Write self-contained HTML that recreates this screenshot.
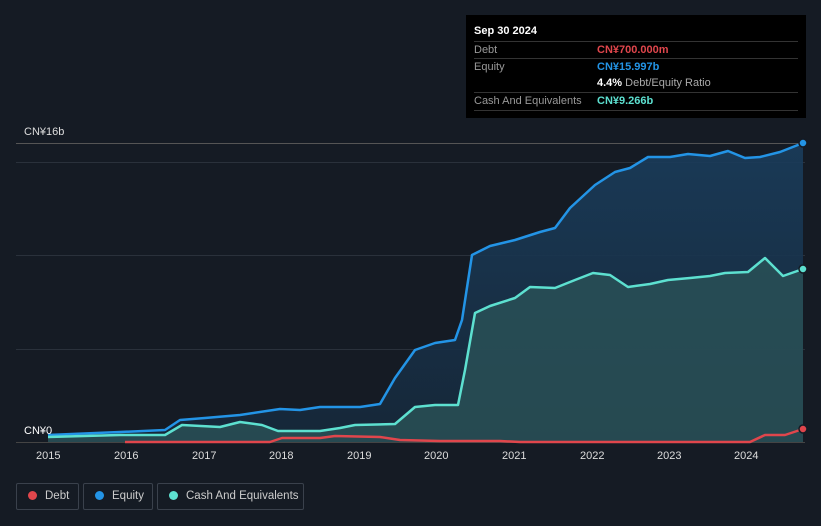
<!DOCTYPE html><html><head><style>
body{margin:0;width:821px;height:526px;background:#151b24;font-family:"Liberation Sans",sans-serif;overflow:hidden;position:relative}
.tt{position:absolute;left:466px;top:15px;width:340px;height:103px;background:#000;color:#fff;font-size:11px}
.tt .r{position:absolute;left:8px;right:8px;border-top:1px solid #333;height:17px;line-height:17px}
.l{color:#999}.v{position:absolute;left:123px;font-weight:bold}
.lg{position:absolute;top:483px;height:27px;border:1px solid #3a414c;border-radius:2px;color:#ccc;font-size:11.5px;line-height:25px;box-sizing:border-box;white-space:nowrap}
.lg i{display:inline-block;width:9px;height:9px;border-radius:50%;margin:0 8px 0 11px;vertical-align:-1px}
.ax{position:absolute;top:450px;color:#ddd;font-size:11px}
</style></head><body>
<svg width="821" height="526" style="position:absolute;left:0;top:0">
<defs><linearGradient id="g" x1="0" y1="0" x2="0" y2="1"><stop offset="0" stop-color="#1a3d5c" stop-opacity=".9"/><stop offset="1" stop-color="#16283a" stop-opacity=".9"/></linearGradient></defs>
<g stroke="#2a313b" stroke-width="1"><line x1="16" y1="143.5" x2="805" y2="143.5" stroke="#555"/><line x1="16" y1="162.5" x2="805" y2="162.5"/><line x1="16" y1="255.5" x2="805" y2="255.5"/><line x1="16" y1="349.5" x2="805" y2="349.5"/><line x1="16" y1="442.5" x2="805" y2="442.5" stroke="#444"/></g>
<path fill="url(#g)" d="M48,435 L120,432 165,430 180,420 205,418 240,415 280,409 300,410 320,407 360,407 380,404 395,378 415,350 435,343 455,340 462,320 472,255 490,246 515,240 540,232 555,228 570,208 595,185 615,172 630,168 648,157 670,157 688,154 710,156 728,151 745,158 760,157 780,152 803,143 L803,442 48,442Z"/>
<path fill="#2a5257" fill-opacity=".8" d="M48,437 L120,435 165,435 182,425 220,427 240,422 262,425 278,431 320,431 340,428 355,425 395,424 415,407 435,405 458,405 465,370 475,313 490,306 515,298 530,287 555,288 575,280 593,273 610,275 628,287 650,284 668,280 690,278 710,276 725,273 748,272 765,258 783,276 803,269 L803,442 48,442Z"/>
<g fill="none" stroke-width="2.5" stroke-linejoin="round">
<path stroke="#2394e6" d="M48,435 L120,432 165,430 180,420 205,418 240,415 280,409 300,410 320,407 360,407 380,404 395,378 415,350 435,343 455,340 462,320 472,255 490,246 515,240 540,232 555,228 570,208 595,185 615,172 630,168 648,157 670,157 688,154 710,156 728,151 745,158 760,157 780,152 803,143"/>
<path stroke="#5de0d0" d="M48,437 L120,435 165,435 182,425 220,427 240,422 262,425 278,431 320,431 340,428 355,425 395,424 415,407 435,405 458,405 465,370 475,313 490,306 515,298 530,287 555,288 575,280 593,273 610,275 628,287 650,284 668,280 690,278 710,276 725,273 748,272 765,258 783,276 803,269"/>
<path stroke="#e0464c" d="M125,442 L270,442 282,438 320,438 335,436 380,437 400,440 440,441 500,441 520,442 750,442 765,435 785,435 803,429"/>
</g>
<g stroke="#151b24" stroke-width="1.5"><circle cx="803" cy="143" r="4" fill="#2394e6"/><circle cx="803" cy="269" r="4" fill="#5de0d0"/><circle cx="803" cy="429" r="4" fill="#e0464c"/></g>
</svg>
<div style="position:absolute;left:24px;top:126px;color:#ddd;font-size:11px">CN¥16b</div>
<div style="position:absolute;left:24px;top:425px;color:#fff;font-size:11px">CN¥0</div>
<div class="ax" style="left:36px">2015</div><div class="ax" style="left:114px">2016</div><div class="ax" style="left:192px">2017</div><div class="ax" style="left:269px">2018</div><div class="ax" style="left:347px">2019</div><div class="ax" style="left:424px">2020</div><div class="ax" style="left:502px">2021</div><div class="ax" style="left:580px">2022</div><div class="ax" style="left:657px">2023</div><div class="ax" style="left:734px">2024</div>
<div class="tt">
<div style="position:absolute;left:8px;top:10px;font-weight:bold">Sep 30 2024</div>
<div class="r" style="top:26px"><span class="l">Debt</span><span class="v" style="color:#e0464c">CN¥700.000m</span></div>
<div class="r" style="top:43px"><span class="l">Equity</span><span class="v" style="color:#2394e6">CN¥15.997b</span></div>
<div class="r" style="top:60px;border:0"><span class="v" style="color:#fff">4.4% <span style="color:#aaa;font-weight:normal">Debt/Equity Ratio</span></span></div>
<div class="r" style="top:77px"><span class="l">Cash And Equivalents</span><span class="v" style="color:#5de0d0">CN¥9.266b</span></div>
<div class="r" style="top:95px;height:0"></div>
</div>
<div class="lg" style="left:16px;width:63px"><i style="background:#e0464c"></i>Debt</div>
<div class="lg" style="left:83px;width:70px"><i style="background:#2394e6"></i>Equity</div>
<div class="lg" style="left:157px;width:147px"><i style="background:#5de0d0"></i>Cash And Equivalents</div>
</body></html>
